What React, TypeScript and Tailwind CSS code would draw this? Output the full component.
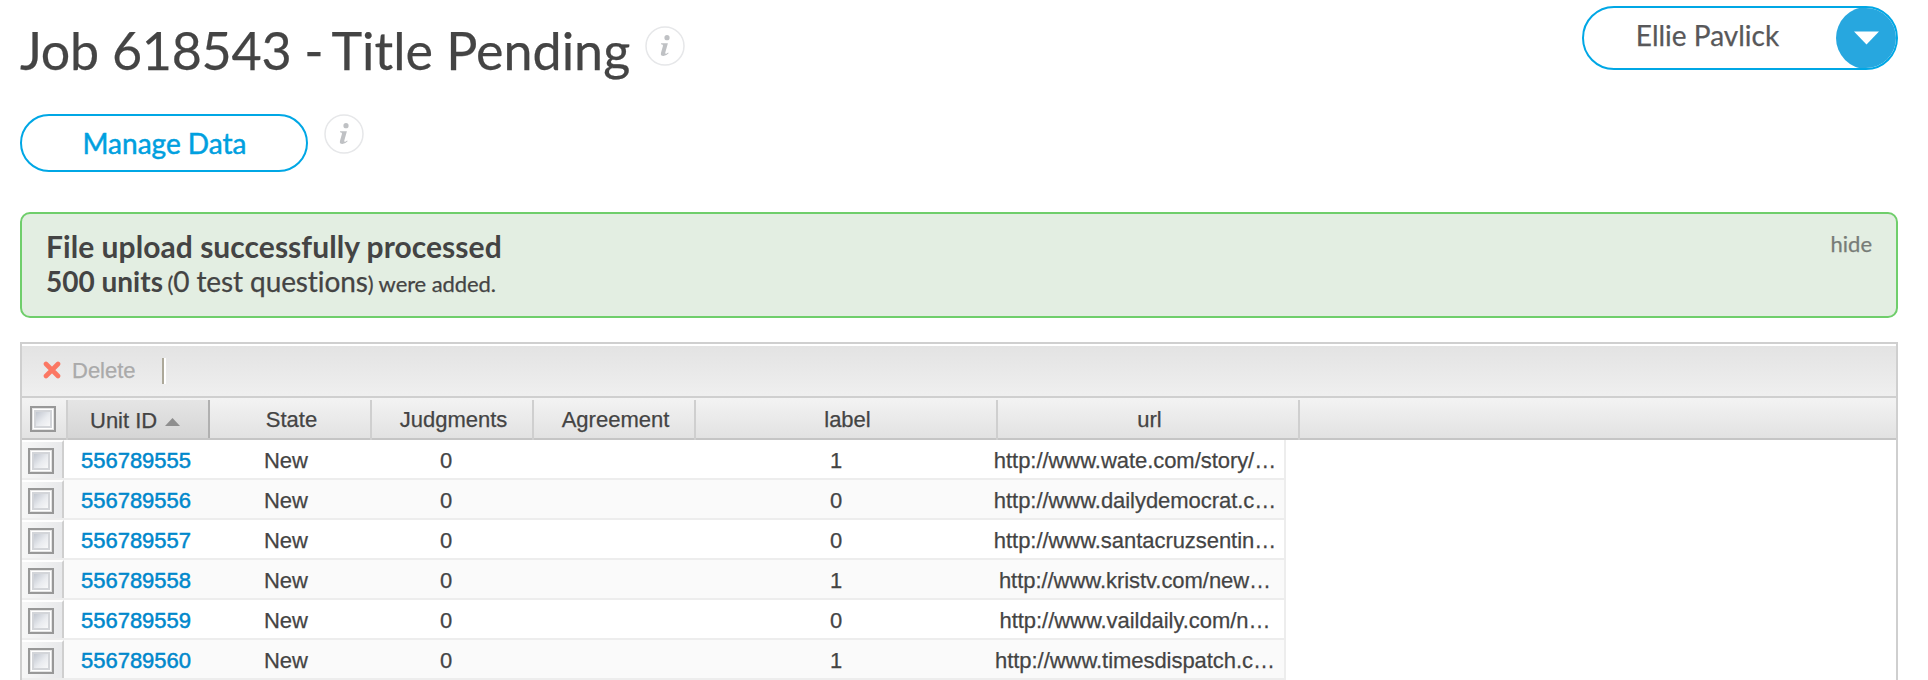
const rows = [
  { id: "556789555", label: "1", url: "http://www.wate.com/story/…" },
  { id: "556789556", label: "0", url: "http://www.dailydemocrat.c…" },
  { id: "556789557", label: "0", url: "http://www.santacruzsentin…" },
  { id: "556789558", label: "1", url: "http://www.kristv.com/new…" },
  { id: "556789559", label: "0", url: "http://www.vaildaily.com/n…" },
  { id: "556789560", label: "1", url: "http://www.timesdispatch.c…" },
];

function InfoIcon() {
  return (
    <svg width="40" height="40" viewBox="0 0 40 40" className="shrink-0">
      <circle cx="20" cy="20" r="19" fill="#fff" stroke="#e6e7e9" strokeWidth="1.5" />
      <circle cx="22" cy="11.700" r="2.600" fill="#bfc1c4" />
      <path
        d="M16 17.200h6.900l-2.600 9.400q-.3 1.600 1 1.100l1.900-1.200.4.800q-2.600 2.800-5.200 2.800-3.200-.2-2.400-3.400l2-7q.4-1.400-1.900-1.500z"
        fill="#bfc1c4"
      />
    </svg>
  );
}

function Checkbox() {
  return (
    <svg width="26" height="26" viewBox="0 0 26 26" className="block shrink-0">
      <defs>
        <linearGradient id="boxFill" x1="0" y1="0" x2="1" y2="1">
          <stop offset="0" stopColor="#bcc2cc" />
          <stop offset="0.55" stopColor="#e9ebef" />
          <stop offset="1" stopColor="#fafafa" />
        </linearGradient>
      </defs>
      <rect x="1" y="1" width="24" height="24" fill="#fff" stroke="#989898" strokeWidth="2" />
      <rect x="2.5" y="2.5" width="21" height="21" fill="none" stroke="#e4e4e4" />
      <rect x="5" y="5" width="16" height="16" fill="url(#boxFill)" stroke="#d3d5d9" strokeWidth="2" />
    </svg>
  );
}

const headCell = "-mb-0.5 flex items-center justify-center border-r-2 border-[#cfcfcf] pb-px pl-[3px]";

export default function App() {
  return (
    <div className="flex h-[680px] w-[1928px] flex-col overflow-hidden bg-white pl-5 pr-[30px] font-['Lato',sans-serif] text-[#444] [-webkit-text-stroke:0.25px]">
      <header className="flex h-[114px] shrink-0 justify-between">
        <div className="flex items-start gap-[15px] pt-[26px]">
          <h1 className="-mt-[8px] whitespace-nowrap text-[52px] leading-[64px] tracking-[-0.26px]">
            Job 618543 - <span className="-ml-[5px] tracking-normal">Title Pending</span>
          </h1>
          <InfoIcon />
        </div>
        <button className="mt-[6px] flex h-16 w-[316px] items-center overflow-hidden rounded-full border-2 border-[#00a7e5]">
          <span className="flex-1 whitespace-nowrap pb-[6px] pr-[5px] text-center text-[28px] leading-9 text-[#58585a]">Ellie Pavlick</span>
          <svg width="60" height="62" viewBox="0 0 60 62">
            <circle cx="31" cy="31" r="31" fill="#27a7df" />
            <path d="M18 24.500h25L30.500 37.500z" fill="#fff" />
          </svg>
        </button>
      </header>

      <div className="flex h-[98px] shrink-0 items-start gap-4">
        <button className="flex h-[58px] w-[288px] items-center justify-center rounded-full border-2 border-[#00a7e5] pl-px text-[28px] leading-9 text-[#00a0df] [-webkit-text-stroke:0.5px]">
          Manage Data
        </button>
        <InfoIcon />
      </div>

      <section className="flex h-[106px] shrink-0 justify-between rounded-[10px] border-2 border-[#6fce6b] bg-[#e3eee2] px-[24px] pt-[14px]">
        <div className="whitespace-nowrap">
          <p className="text-[30px] font-bold leading-[36px] tracking-[0.05px] [-webkit-text-stroke:0px]">File upload successfully processed</p>
          <p className="text-[22px] leading-[34px] tracking-[-0.1px]">
            <strong className="text-[28px] font-bold tracking-normal [-webkit-text-stroke:0px]">500 units</strong>
            <span className="-ml-px"> (</span>
            <span className="text-[28px]">0 test questions</span>)
            <span> were added.</span>
          </p>
        </div>
        <span className="pt-[2px] text-[22px] leading-[28px] text-[#777c77]">hide</span>
      </section>

      <section className="mt-6 flex h-[400px] shrink-0 flex-col border-x-2 border-t-2 border-[#cfcfcf] pt-[2px] font-['Liberation_Sans',Arial,sans-serif] text-[22px]">
        <div className="flex h-[52px] shrink-0 items-center border-b-2 border-[#cfcfcf] bg-linear-to-b from-[#e3e3e3] to-[#efefef] pb-[2px] pl-[21px]">
          <svg width="18" height="18" viewBox="0 0 18 18">
            <path d="M3 3l12 12M15 3L3 15" stroke="#fb7763" strokeWidth="4.600" strokeLinecap="round" />
          </svg>
          <span className="ml-[11px] text-[#aaa]">Delete</span>
          <span className="ml-[26px] mt-[2px] h-[26px] w-1 border-l-2 border-r-2 border-l-[#aca899] border-r-white" />
        </div>

        <div className="flex h-[42px] shrink-0 border-b-2 border-[#c5c5c5] bg-linear-to-b from-[#f3f3f3] to-[#e2e2e2] pt-[2px]">
          <div className="-mb-0.5 flex w-[46px] items-center border-r-2 border-[#cfcfcf] pb-[3px] pl-2">
            <Checkbox />
          </div>
          <div className="flex w-[142px] items-center border-r-2 border-[#b0b0b0] bg-linear-to-b from-[#e5e5e5] to-[#d5d5d5] pl-[22px]">
            <span className="pt-[2px]">Unit ID</span>
            <svg width="15" height="8" viewBox="0 0 15 8" className="ml-[8px] mt-[6px]">
              <path d="M0 8L7.500 0 15 8z" fill="#8e8e8e" />
            </svg>
          </div>
          <div className={`${headCell} w-[162px]`}>State</div>
          <div className={`${headCell} w-[162px]`}>Judgments</div>
          <div className={`${headCell} w-[162px]`}>Agreement</div>
          <div className={`${headCell} w-[302px]`}>label</div>
          <div className={`${headCell} w-[302px]`}>url</div>
        </div>

        {rows.map((row, i) => (
          <div
            key={row.id}
            className={`flex h-10 w-[1264px] shrink-0 items-stretch border-b-2 border-r-2 border-[#ededed] ${i % 2 ? "bg-[#fafafa]" : "bg-white"}`}
          >
            <div className="flex w-[42px] items-center border-r-2 border-t-2 border-r-[#cfcfcf] border-t-white bg-linear-to-r from-[#f7f7f7] to-[#e8e9eb] pl-[6px] pt-[2px]">
              <Checkbox />
            </div>
            <div className="flex w-[144px] items-center justify-center pt-[2px] text-[#0088cc] [-webkit-text-stroke:0.5px]">{row.id}</div>
            <div className="flex w-[156px] items-center justify-center pt-[2px]">New</div>
            <div className="flex w-[164px] items-center justify-center pt-[2px]">0</div>
            <div className="w-[158px]" />
            <div className="flex w-[300px] items-center justify-center pt-[2px]">{row.label}</div>
            <div className="flex w-[298px] items-center justify-center whitespace-nowrap pt-[2px] tracking-[-0.05px]">{row.url}</div>
          </div>
        ))}
      </section>
    </div>
  );
}
